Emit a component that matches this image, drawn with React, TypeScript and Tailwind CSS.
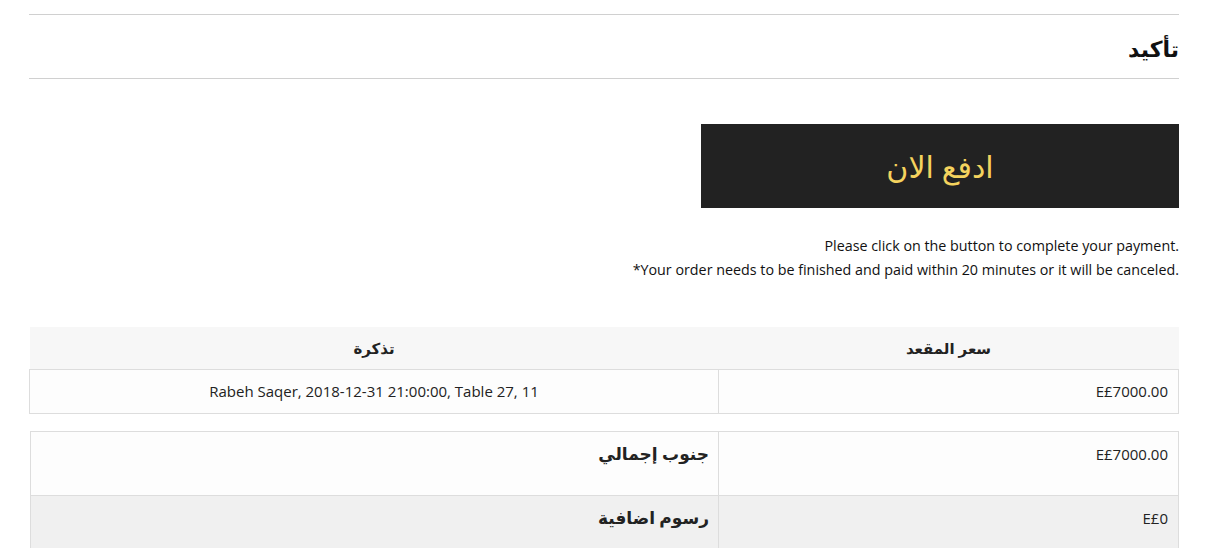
import React from "react";

export default function App() {
  return (
    <div
      className="w-[1218px] h-[548px] overflow-hidden bg-white text-[#222] pl-[29px] pr-[39px]"
      style={{ fontFamily: '"Open Sans", "Noto Sans", "DejaVu Sans", sans-serif' }}
    >
      <div dir="rtl" className="w-[1150px] pt-[14px]">
        <div className="border-t border-b border-[#d0d0d0] h-[65px] flex items-center">
          <h2 className="text-[22px] font-bold text-[#111] leading-none pt-[2px]">تأكيد</h2>
        </div>

        <div className="mt-[45px] flex">
          <button className="w-[478px] h-[84px] bg-[#222222] text-[#f4d35e] text-[30px] flex items-center justify-center">
            ادفع الان
          </button>
        </div>

        <div dir="ltr" className="mt-[26px] text-right text-[14.3px] leading-[24px] text-[#111]">
          <p>Please click on the button to complete your payment.</p>
          <p>*Your order needs to be finished and paid within 20 minutes or it will be canceled.</p>
        </div>

        <table className="mt-[45px] w-[1150px] border-collapse text-[15px]">
          <thead>
            <tr className="bg-[#f7f7f7] h-[42px]">
              <th className="w-[460px] font-bold text-center text-[15px]">سعر المقعد</th>
              <th className="font-bold text-center text-[15px]">تذكرة</th>
            </tr>
          </thead>
          <tbody>
            <tr className="h-[44px] bg-[#fdfdfd]">
              <td className="border border-[#dddddd] px-[10px] text-right" dir="ltr">E£7000.00</td>
              <td className="border border-[#dddddd] px-[10px] text-center" dir="ltr">
                Rabeh Saqer, 2018-12-31 21:00:00, Table 27, 11
              </td>
            </tr>
          </tbody>
        </table>

        <table className="mt-[17px] w-[1149px] border-collapse text-[15px]">
          <tbody>
            <tr className="h-[64px] bg-[#fdfdfd]">
              <td className="w-[460px] border border-[#dddddd] px-[10px] align-top pt-[11px] text-right" dir="ltr">
                E£7000.00
              </td>
              <td className="border border-[#dddddd] pl-[10px] pr-[9px] align-top pt-[9px] text-right text-[17px] font-bold">
                جنوب إجمالي
              </td>
            </tr>
            <tr className="h-[64px] bg-[#f0f0f0]">
              <td className="border border-[#dddddd] px-[10px] align-top pt-[11px] text-right" dir="ltr">
                E£0
              </td>
              <td className="border border-[#dddddd] pl-[10px] pr-[9px] align-top pt-[9px] text-right text-[17px] font-bold">
                رسوم اضافية
              </td>
            </tr>
          </tbody>
        </table>
      </div>
    </div>
  );
}
